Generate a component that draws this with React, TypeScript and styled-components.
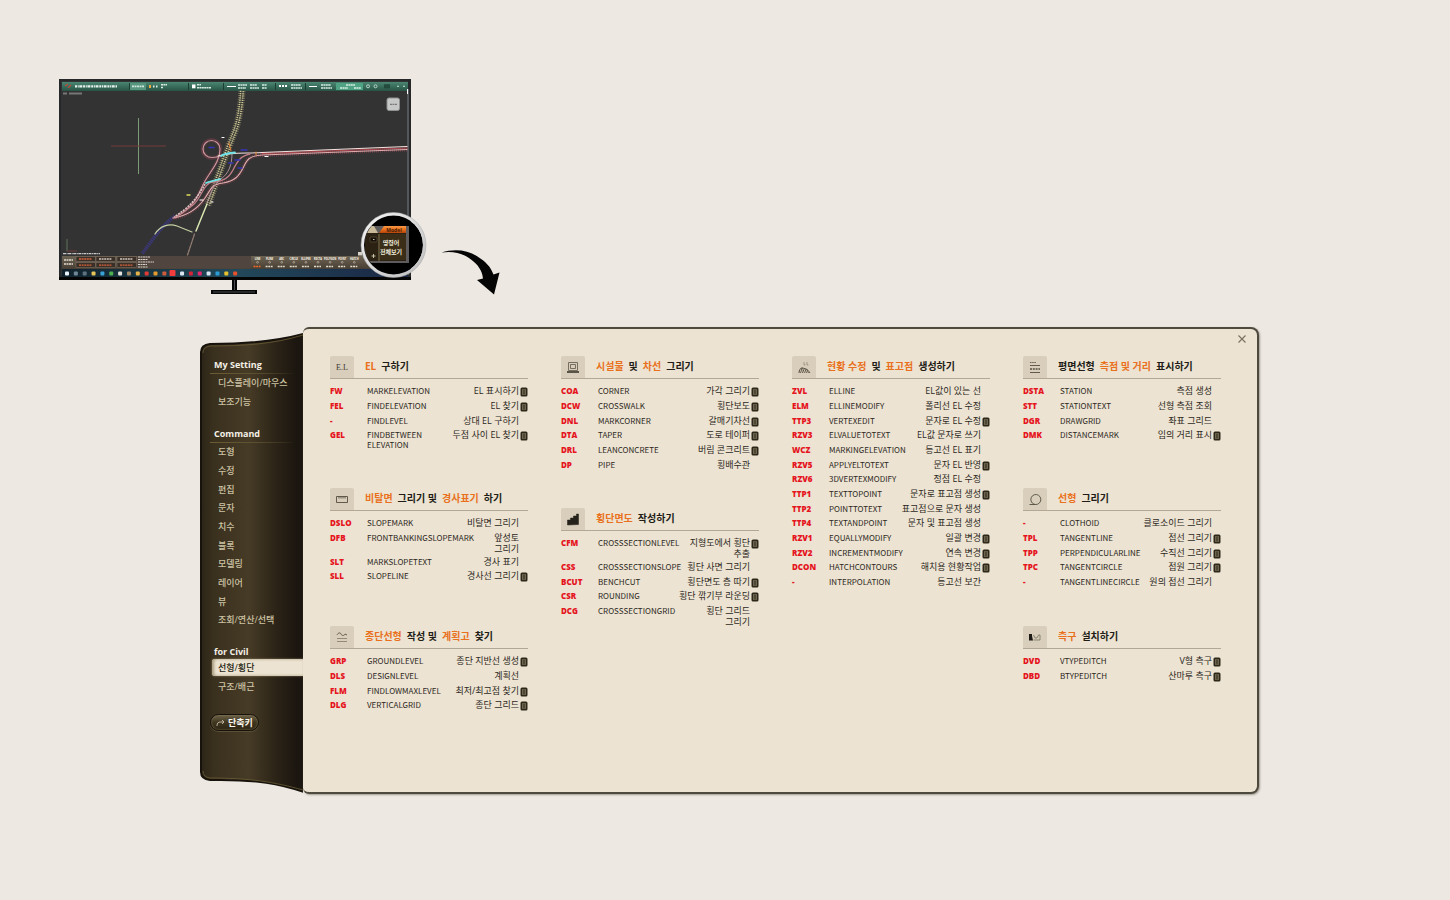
import React from "react";
import styled, { createGlobalStyle } from "styled-components";

const GlobalStyle = createGlobalStyle`
  * { box-sizing: border-box; }
  body {
    margin: 0;
    background: #ede8e2;
    color: #2d2822;
    font-family: "Open Sans", "Noto Sans CJK KR", sans-serif;
  }
`;

/* ---------- data ---------- */

type Command = { code: string; name: string[]; desc: string[]; badge?: boolean };
type Part = { text: string; hot?: boolean };
type IconName = "el" | "ruler" | "profile" | "frame" | "stairs" | "terrain" | "station" | "curve" | "ditch";
type Group = { id: string; icon: IconName; title: Part[]; rows: Command[]; reach?: number };

const row = (code: string, name: string, desc: string, badge = false): Command => ({
  code,
  name: name.split("|"),
  desc: desc.split("|"),
  badge,
});
const hot = (text: string): Part => ({ text, hot: true });
const ink = (text: string): Part => ({ text });

const columns: Group[][] = [
  [
    {
      id: "el", icon: "el", reach: 132, title: [hot("EL"), ink("구하기")],
      rows: [
        row("FW", "MARKELEVATION", "EL 표시하기", true),
        row("FEL", "FINDELEVATION", "EL 찾기", true),
        row("-", "FINDLEVEL", "상대 EL 구하기"),
        row("GEL", "FINDBETWEEN|ELEVATION", "두점 사이 EL 찾기", true),
      ],
    },
    {
      id: "slope", icon: "ruler", reach: 138,
      title: [hot("비탈면"), ink("그리기 및"), hot("경사표기"), ink("하기")],
      rows: [
        row("DSLO", "SLOPEMARK", "비탈면 그리기"),
        row("DFB", "FRONTBANKINGSLOPEMARK", "앞성토|그리기"),
        row("SLT", "MARKSLOPETEXT", "경사 표기"),
        row("SLL", "SLOPELINE", "경사선 그리기", true),
      ],
    },
    {
      id: "profile", icon: "profile",
      title: [hot("종단선형"), ink("작성 및"), hot("계획고"), ink("찾기")],
      rows: [
        row("GRP", "GROUNDLEVEL", "종단 지반선 생성", true),
        row("DLS", "DESIGNLEVEL", "계획선"),
        row("FLM", "FINDLOWMAXLEVEL", "최저/최고점 찾기", true),
        row("DLG", "VERTICALGRID", "종단 그리드", true),
      ],
    },
  ],
  [
    {
      id: "facility", icon: "frame", reach: 152,
      title: [hot("시설물"), ink("및"), hot("차선"), ink("그리기")],
      rows: [
        row("COA", "CORNER", "가각 그리기", true),
        row("DCW", "CROSSWALK", "횡단보도", true),
        row("DNL", "MARKCORNER", "갈매기차선", true),
        row("DTA", "TAPER", "도로 테이퍼", true),
        row("DRL", "LEANCONCRETE", "버림 콘크리트", true),
        row("DP", "PIPE", "횡배수관"),
      ],
    },
    {
      id: "cross", icon: "stairs", title: [hot("횡단면도"), ink("작성하기")],
      rows: [
        row("CFM", "CROSSSECTIONLEVEL", "지형도에서 횡단|추출", true),
        row("CSS", "CROSSSECTIONSLOPE", "횡단 사면 그리기"),
        row("BCUT", "BENCHCUT", "횡단면도 층 따기", true),
        row("CSR", "ROUNDING", "횡단 깎기부 라운딩", true),
        row("DCG", "CROSSSECTIONGRID", "횡단 그리드|그리기"),
      ],
    },
  ],
  [
    {
      id: "survey", icon: "terrain",
      title: [hot("현황 수정"), ink("및"), hot("표고점"), ink("생성하기")],
      rows: [
        row("ZVL", "ELLINE", "EL값이 있는 선"),
        row("ELM", "ELLINEMODIFY", "폴리선 EL 수정"),
        row("TTP3", "VERTEXEDIT", "문자로 EL 수정", true),
        row("RZV3", "ELVALUETOTEXT", "EL값 문자로 쓰기"),
        row("WCZ", "MARKINGELEVATION", "등고선 EL 표기"),
        row("RZV5", "APPLYELTOTEXT", "문자 EL 반영", true),
        row("RZV6", "3DVERTEXMODIFY", "정점 EL 수정"),
        row("TTP1", "TEXTTOPOINT", "문자로 표고점 생성", true),
        row("TTP2", "POINTTOTEXT", "표고점으로 문자 생성"),
        row("TTP4", "TEXTANDPOINT", "문자 및 표고점 생성"),
        row("RZV1", "EQUALLYMODIFY", "일괄 변경", true),
        row("RZV2", "INCREMENTMODIFY", "연속 변경", true),
        row("DCON", "HATCHCONTOURS", "해치용 현황작업", true),
        row("-", "INTERPOLATION", "등고선 보간"),
      ],
    },
  ],
  [
    {
      id: "station", icon: "station", reach: 132,
      title: [ink("평면선형"), hot("측점 및 거리"), ink("표시하기")],
      rows: [
        row("DSTA", "STATION", "측점 생성"),
        row("STT", "STATIONTEXT", "선형 측점 조회"),
        row("DGR", "DRAWGRID", "좌표 그리드"),
        row("DMK", "DISTANCEMARK", "임의 거리 표시", true),
      ],
    },
    {
      id: "alignment", icon: "curve", reach: 138, title: [hot("선형"), ink("그리기")],
      rows: [
        row("-", "CLOTHOID", "클로소이드 그리기"),
        row("TPL", "TANGENTLINE", "접선 그리기", true),
        row("TPP", "PERPENDICULARLINE", "수직선 그리기", true),
        row("TPC", "TANGENTCIRCLE", "접원 그리기", true),
        row("-", "TANGENTLINECIRCLE", "원의 접선 그리기"),
      ],
    },
    {
      id: "ditch", icon: "ditch", title: [hot("측구"), ink("설치하기")],
      rows: [
        row("DVD", "VTYPEDITCH", "V형 측구", true),
        row("DBD", "BTYPEDITCH", "산마루 측구", true),
      ],
    },
  ],
];

const menus = [
  { title: "My Setting", ruled: true, items: ["디스플레이/마우스", "보조기능"] },
  {
    title: "Command",
    ruled: true,
    items: ["도형", "수정", "편집", "문자", "치수", "블록", "모델링", "레이어", "뷰", "조회/연산/선택"],
  },
  { title: "for Civil", ruled: false, items: ["선형/횡단", "구조/배근"] },
];
const activeItem = "선형/횡단";

/* ---------- page ---------- */

const Page = styled.main`
  min-height: 100vh;
  padding-bottom: 80px;
`;

const Hero = styled.header`
  padding: 72px 0 0 52px;
  svg { display: block; }
`;

const Book = styled.section`
  display: flex;
  align-items: stretch;
  margin: 27px 191px 0 200px;
`;

/* ---------- sidebar ---------- */

const Side = styled.nav`
  position: relative;
  flex: 0 0 103px;
  padding: 31px 0 56px 10px;
`;

const Cover = styled.svg`
  position: absolute;
  inset: 0;
  width: 100%;
  height: 100%;
`;

const Menu = styled.div`
  position: relative;
  margin-bottom: 15px;
`;

const MenuTitle = styled.h2<{ $ruled: boolean }>`
  margin: 0 8px 0 0;
  padding-left: 4px;
  height: ${(p) => (p.$ruled ? 16 : 14)}px;
  font-size: 9px;
  line-height: 14px;
  font-weight: 700;
  color: #f4f0e6;
  border-bottom: ${(p) => (p.$ruled ? "1px solid" : "0 solid")};
  border-image: linear-gradient(90deg, #6a5c33, #5d5130 50%, transparent) 1;
`;

const MenuList = styled.ul`
  list-style: none;
  margin: 0;
  padding: 0;
`;

const MenuItem = styled.li`
  height: 19px;
  &:nth-child(3n) { height: 18px; }
`;

const MenuLink = styled.a<{ $active: boolean }>`
  display: block;
  height: 17px;
  margin-left: 2px;
  padding-left: 6px;
  font-size: 9px;
  line-height: 17px;
  font-weight: 500;
  white-space: nowrap;
  text-decoration: none;
  border-radius: 3px 0 0 3px;
  color: ${(p) => (p.$active ? "#241d10" : "#cdc3a4")};
  background: ${(p) => (p.$active ? "#ece3d2" : "transparent")};
  box-shadow: ${(p) => (p.$active ? "inset 2px 0 3px #a89b7c, 0 0 2px #9c8f6c" : "none")};
`;

const ShortcutButton = styled.button`
  position: relative;
  display: flex;
  align-items: center;
  gap: 3px;
  width: 49px;
  height: 17px;
  margin-top: 17px;
  padding: 0 5px;
  border: 1px solid #16120a;
  border-radius: 9px;
  background: linear-gradient(#6c6147, #40361f 50%, #2c2413);
  box-shadow: inset 0 0 2px #8d8264, 0 1px 0 #5c5138;
  color: #fbf8f0;
  font: 700 9px/15px "Open Sans", "Noto Sans CJK KR", sans-serif;
  white-space: nowrap;
`;

/* ---------- sheet ---------- */

const Sheet = styled.div`
  position: relative;
  flex: 1;
  min-width: 0;
  min-height: 467px;
  padding: 27px 36px 40px 27px;
  background: #ece3d2;
  border: 2px solid #4e4a3e;
  border-left: 0;
  border-radius: 6px 8px 8px 6px;
  box-shadow: 1px 1px 2px #a19b90;
`;

const CloseButton = styled.button`
  position: absolute;
  top: 5px;
  right: 10px;
  width: 10px;
  height: 10px;
  padding: 0;
  border: 0;
  background: none;
  svg { display: block; }
`;

const Columns = styled.div`
  display: grid;
  grid-template-columns: repeat(4, minmax(0, 1fr));
  column-gap: 33px;
`;

const GroupBlock = styled.section<{ $reach: number }>`
  min-height: ${(p) => p.$reach}px;
`;

const GroupHead = styled.div`
  display: flex;
  align-items: stretch;
  gap: 11px;
  height: 23px;
  border-bottom: 1px solid #b3a896;
`;

const IconTile = styled.span`
  width: 24px;
  height: 22px;
  border-radius: 2px 2px 0 0;
  background: #d8cebb;
  svg { display: block; }
`;

const GroupTitle = styled.h3`
  display: flex;
  gap: 5px;
  margin: 0;
  font-size: 10px;
  line-height: 20px;
  font-weight: 700;
  white-space: nowrap;
`;

const TitlePart = styled.span<{ $hot?: boolean }>`
  color: ${(p) => (p.$hot ? "#e9701c" : "#211c16")};
`;

const CommandTable = styled.table`
  width: 100%;
  margin-top: 5px;
  table-layout: fixed;
  border-collapse: collapse;
`;

const CommandRow = styled.tr`
  height: 15px;
  &:nth-child(3n) { height: 14px; }
`;

const Code = styled.th`
  width: 37px;
  padding: 2px 0;
  text-align: left;
  vertical-align: top;
  font-size: 8px;
  line-height: 10px;
  font-weight: 800;
  color: #e5141d;
  white-space: nowrap;
`;

const Name = styled.td`
  padding: 2px 0;
  vertical-align: top;
  font-family: "Noto Sans CJK KR", sans-serif;
  font-size: 8px;
  line-height: 10px;
  white-space: nowrap;
`;

const Desc = styled.td`
  width: 85px;
  padding: 1px 0;
  text-align: right;
  vertical-align: top;
  font-size: 9px;
  line-height: 11px;
  white-space: nowrap;
`;

const Mark = styled.td`
  width: 9px;
  padding: 3px 0 0 1px;
  vertical-align: top;
  line-height: 0;
`;

/* ---------- drawings ---------- */

const groupDrawings: Record<IconName, React.ReactNode> = {
  el: <text x="12" y="14" textAnchor="middle" fontFamily="Liberation Serif, serif" fontSize="8" fill="#3b352b" stroke="none">E.L</text>,
  ruler: <path d="M6.500 8.500h11v6h-11zM9 8.500v2M11 8.500v2M13 8.500v2M15 8.500v2" />,
  profile: (
    <>
      <path d="M7 9c1-2 3-3 4-1s3 2 4 0l2 1" />
      <path d="M7 12.500h10M7 15.500h10" stroke="#8b8271" />
    </>
  ),
  frame: (
    <>
      <path d="M7.500 6.500h9v8h-9zM9.500 8.500h5v4h-5z" stroke="#6b6354" />
      <path d="M6 16h12" stroke="#2f2a22" strokeWidth="1.500" />
    </>
  ),
  stairs: <path d="M6.500 17v-5h3v-2h3v-2h3v-2h2v10.500z" fill="#25211b" stroke="#25211b" strokeWidth="0.500" />,
  terrain: (
    <>
      <path d="M7 17c0-3 2-6 4-5s4 0 7 5M8.500 17l-1-3M10.500 17l-1.500-5M12.500 17l-2-5M14.500 17l-2-5M16.500 17l-2-4" />
      <path d="M12 6v3h1.500M15 6v3h1.500" strokeWidth="0.600" stroke="#7c7362" />
    </>
  ),
  station: (
    <>
      <path d="M7 9.500h10M7 16.500h10" />
      <path d="M7 6.500h6" strokeDasharray="1.500 0.700" />
      <path d="M7 13h10" strokeDasharray="2 0.800" strokeWidth="1.400" />
    </>
  ),
  curve: <path d="M6.500 16.500h6a5 5 0 1 0-4-2.500c1 1.500 2 2 4 2.500" />,
  ditch: (
    <>
      <path d="M6 8h3v2l1 4.500h-4z" fill="#1f1b16" stroke="none" />
      <path d="M10.500 14h6.500v-5h-1.500l-1.500 3h-2l-1.500-3" stroke="#847b6a" />
    </>
  ),
};

const GroupIcon = ({ name }: { name: IconName }) => (
  <svg width="24" height="22" viewBox="0 0 24 22" fill="none" stroke="#554d40" strokeWidth="0.9" aria-hidden="true">
    {groupDrawings[name]}
  </svg>
);

const Badge = () => (
  <svg width="8" height="10" viewBox="0 0 8 10" role="img" aria-label="icon">
    <rect x="0.500" y="0.500" width="7" height="9" rx="1.500" fill="#2d2719" />
    <rect x="2" y="2" width="4" height="6" rx="1" fill="#7d755d" />
    <path d="M4 2v6M2.500 4h3M2.500 6h3" stroke="#2d2719" strokeWidth="0.700" />
  </svg>
);

const roads = {
  upper: "M242 91c-1 15-3 31-9 45s-12 33-25 69",
  main: "M407 146.500L262 152.500c-20 1-32 0-44 3.500",
  mainLow: "M407 149.500L262 155c-14 1-15 5-19 13s-8 13-20 15-10 3-18 15-19 18-32 20",
  ramp: "M250 154c-10 2-13 8-17 16s-11 12-20 12-12 17-20 23-12 10-20 13",
  loop: "M203 149a8.500 8.500 0 1 1 17 0c0 12-8 20-15 32s-6 22-30 37M203 149c0 5 4 8.500 9 8.500 4 0 7-1 9-2",
};

const commandKeys = ["LINE", "PLINE", "ARC", "CIRCLE", "ELLIPSE", "RECTA", "POLYGON", "POINT", "HATCH"];
const taskColors = [
  "#e8f2fa", "#6f8795", "#5d7480", "#e8c35a", "#39a3d8", "#4caf50", "#e6e2dc", "#a08a6a", "#e5b24a", "#e03a34",
  "#e49a2c", "#d05a3c", "#f03c3c", "#dce6ee", "#d42438", "#e8286c", "#d8e6f4", "#2c9cd8", "#e8c02c", "#e4512c",
];

const Illustration = () => (
  <svg width="456" height="228" viewBox="52 72 456 228" role="img" aria-label="CAD workstation with a magnified command menu">
    <defs>
      <linearGradient id="bar" x1="0" y1="0" x2="0" y2="1">
        <stop offset="0" stopColor="#4a8672" />
        <stop offset="1" stopColor="#285345" />
      </linearGradient>
      <linearGradient id="task" x1="0" y1="0" x2="1" y2="0">
        <stop offset="0" stopColor="#10222c" />
        <stop offset="0.500" stopColor="#22495a" />
        <stop offset="1" stopColor="#1a2544" />
      </linearGradient>
      <linearGradient id="brown" x1="0" y1="0" x2="0" y2="1">
        <stop offset="0" stopColor="#6d6353" />
        <stop offset="1" stopColor="#483f34" />
      </linearGradient>
      <linearGradient id="orange" x1="0" y1="0" x2="0" y2="1">
        <stop offset="0" stopColor="#f79a48" />
        <stop offset="0.500" stopColor="#ea6d18" />
        <stop offset="1" stopColor="#b5450a" />
      </linearGradient>
      <linearGradient id="ring" x1="0" y1="0" x2="1" y2="1">
        <stop offset="0" stopColor="#f6f6f6" />
        <stop offset="1" stopColor="#bdbdbd" />
      </linearGradient>
      <clipPath id="lens"><circle cx="393.500" cy="245" r="29" /></clipPath>
    </defs>

    {/* monitor body and stand */}
    <rect x="59" y="79" width="352" height="200.500" fill="#262829" />
    <rect x="61" y="81" width="347" height="194" fill="#333333" />
    <rect x="59" y="277" width="352" height="3" fill="#050505" />
    <rect x="232" y="280" width="5" height="11" fill="#050505" />
    <rect x="211" y="290" width="46" height="4" fill="#050505" />
    <path d="M213 292h42M234.500 280v10" stroke="#4a4c50" strokeWidth="1" />

    {/* title bar */}
    <rect x="62" y="82" width="346" height="9" fill="url(#bar)" />
    <rect x="130" y="83" width="16" height="7" fill="#57957f" />
    <rect x="336" y="83" width="27" height="7" fill="#4fa283" />
    <path d="M129.500 83v7M188.500 83v7M223.500 83v7M275.500 83v7M305.500 83v7" stroke="#1d3c32" />
    <path d="M65 86l3-2M68 88l3-3" stroke="#c4483a" strokeWidth="1.200" />
    <path d="M75 86.300h42" stroke="#e6f2ec" strokeWidth="2.200" strokeDasharray="2 0.700 1 0.600 3 0.800" />
    <path d="M132 86.300h12" stroke="#cde6da" strokeWidth="1.800" strokeDasharray="2 0.500" />
    <rect x="149" y="85" width="2" height="3" fill="#f2a93c" />
    <path d="M153 86.500h6" stroke="#dfe9e4" strokeWidth="2" strokeDasharray="1.500 1.500" />
    <path d="M161 84.800h6M161 87.600h2M197 84.800h4M197 87.800h14M238 85h9M250 85h7M262 85h5M238 88h8M250 88h9M262 88h5M291 85h10M291 88h11M321 85h10M321 88h11M346 85h9M340 88h8M354 88h7" stroke="#d8ebe2" strokeWidth="1.500" strokeDasharray="2 0.400" />
    <rect x="192" y="84.500" width="3.500" height="3.800" fill="#fff" />
    <path d="M227 86.500h9M309 86.500h8" stroke="#fff" />
    <path d="M279 86h8" stroke="#fff" strokeWidth="2" strokeDasharray="2 1" />
    <circle cx="368" cy="86.300" r="1.500" fill="none" stroke="#b9d4c8" />
    <circle cx="375.500" cy="86.300" r="1.500" fill="none" stroke="#b9d4c8" />
    <path d="M384 86.300h6" stroke="#234a3c" strokeWidth="4" />
    <path d="M397 86.300h2M403 86.300h2" stroke="#c9dfd5" />

    {/* canvas */}
    <path d="M63 93.500h4M69 93.500h13" stroke="#777" strokeWidth="2" />
    <path d="M138.500 118v56" stroke="#7d9a76" />
    <path d="M111 146h55" stroke="#753c3c" />
    <path d="M408 89v186" stroke="#55585a" strokeWidth="2" />
    <path d="M407.500 89v5" stroke="#fff" />
    <path d="M67 239v12" fill="none" stroke="#5f7c5c" strokeWidth="0.900" />
    <path d="M67 251h10" fill="none" stroke="#7a3b3b" strokeWidth="0.900" />
    <rect x="387" y="98" width="12.500" height="12.500" rx="2" fill="#c6c7c7" stroke="#8f9191" />
    <path d="M390 104.300h7" stroke="#666" strokeDasharray="2 0.500" />

    <g fill="none" strokeLinecap="round">
      <path d="M175 216c-14 10-24 26-33 38" stroke="#3b3778" strokeWidth="3.500" strokeDasharray="1.500 0.700" strokeLinecap="butt" />
      <path d={roads.upper} stroke="#77735a" strokeWidth="7" strokeDasharray="1 1.200" strokeLinecap="butt" />
      <path d={roads.upper} stroke="#cfc896" strokeWidth="4" strokeDasharray="1.200 1" strokeLinecap="butt" />
      <path d={roads.upper} stroke="#414238" strokeWidth="1" />
      <circle cx="211.500" cy="149" r="10" stroke="#5c3a42" strokeWidth="1.500" strokeDasharray="1 1" />
      <path d={roads.loop} stroke="#5c3a42" strokeWidth="4" strokeDasharray="1 1" strokeLinecap="butt" />
      <path d={roads.loop} stroke="#cf969c" strokeWidth="1.200" />
      <path d={roads.mainLow} stroke="#6a3e47" strokeWidth="4" strokeDasharray="1 1" strokeLinecap="butt" />
      <path d="M407 148L262 153.700" stroke="#a8464c" strokeWidth="1.200" />
      <path d={roads.main} stroke="#f5e2df" strokeWidth="1.200" />
      <path d={roads.mainLow} stroke="#e0adae" strokeWidth="1.100" />
      <path d={roads.ramp} stroke="#c07d86" strokeWidth="1.300" />
      <path d="M205 184c-6 12-16 24-31 33" stroke="#d8c3c4" strokeWidth="1.500" strokeDasharray="2 1" strokeLinecap="butt" />
      <path d="M232 153c0 12-3 20-11 26s-10 14-14 24" stroke="#a88f96" strokeWidth="1" />
      <path d="M221 156c3-2 8-3 14-3.500M206 183c3-2 8-2 14-4" stroke="#6fe4e6" strokeWidth="1.800" />
      <path d="M209 147.500h5M241 150h6M235 160h5M229 163h4M238 168h4" stroke="#3734b8" strokeWidth="1.500" />
      <path d="M222 137.500h2M265 156.500h3M200 200h3M211 202h2" stroke="#fff" strokeWidth="1.200" />
      <path d="M187 195h3" stroke="#dede5a" strokeWidth="1.300" />
      <path d="M207 204l-11 27" stroke="#d8e6b0" strokeWidth="1.500" />
      <path d="M194.500 234l-7 21" stroke="#937d72" strokeWidth="1.300" strokeDasharray="3 1" />
      <path d="M155 234c5-8 14-11 22-8l15 6" stroke="#c5d0a4" strokeWidth="1.200" />
      <path d="M229 143l2 8M256 152v3" stroke="#e07a2c" strokeWidth="1" />
    </g>

    {/* command bar */}
    <path d="M63 253.700h37" stroke="#c8c8c8" strokeWidth="1.200" strokeDasharray="3 0.600 1 0.500" />
    <rect x="62" y="256" width="346" height="13" fill="url(#brown)" />
    <rect x="137" y="256" width="114" height="12.500" fill="#50463f" />
    <path d="M64 260h9M64 264h9" stroke="#e0dace" strokeWidth="1.700" strokeDasharray="2 0.500" />
    {[76, 96, 117].map((x) => (
      <g key={x}>
        <rect x={x} y="256.500" width="19.500" height="5" fill="#3b3028" stroke="#85796a" strokeWidth="0.500" />
        <rect x={x} y="262.500" width="19.500" height="5" fill="#3b3028" stroke="#85796a" strokeWidth="0.500" />
        <path d={`M${x + 3} 265.200h13`} stroke="#d9643c" strokeWidth="1.300" strokeDasharray="2 0.600" />
        <path d={`M${x + 3} 259h13`} stroke={x === 76 ? "#d9643c" : "#cfc8ba"} strokeWidth="1.300" strokeDasharray="2 0.600" />
      </g>
    ))}
    <path d="M138 257h12M138 259.500h10M138 262h16M138 264.500h9M138 267h10" stroke="#d8d2c8" strokeWidth="1" strokeDasharray="2 0.500" />
    {commandKeys.map((key, i) => (
      <g key={key}>
        <text x={257.500 + i * 12.100} y="259.500" textAnchor="middle" fontSize="2.500" fontWeight="700" fill="#fffaf0">{key}</text>
        <circle cx={257.500 + i * 12.100} cy="262.300" r="0.900" fill="none" stroke="#ddd5c6" strokeWidth="0.500" />
        <path d={`M${253.500 + i * 12.100} 266.500h7`} stroke={i === 0 ? "#f06a2c" : "#e3dccd"} strokeWidth="1.700" strokeDasharray="2 0.700" />
      </g>
    ))}
    <rect x="358" y="252" width="4" height="3.500" fill="#d8d2c4" />

    {/* task bar */}
    <rect x="62" y="269" width="346" height="8" fill="url(#task)" />
    {taskColors.map((color, i) => (
      <rect key={i} x={i === 12 ? 169.500 : 65 + i * 8.850} y={i === 12 ? 270 : 271.500} width={i === 12 ? 6 : 4} height={i === 12 ? 6 : 4} rx="1" fill={color} />
    ))}

    {/* magnifier */}
    <circle cx="393.500" cy="245" r="29.500" fill="#000" />
    <g clipPath="url(#lens)">
      <path d="M365 226h44v37h-44z" fill="#5d5b5b" />
      <rect x="365" y="233" width="41" height="28" fill="#2b2213" />
      <rect x="380" y="234" width="26" height="26" rx="1" fill="#3a2e19" />
      <path d="M379 234v27" stroke="#85754f" />
      <path d="M365 226h9l4 7h-13z" fill="#c8b999" />
      <path d="M379 233l5-7h22v7z" fill="url(#orange)" />
      <rect x="370" y="237" width="7" height="5" rx="1" fill="#18120a" stroke="#6a5d40" strokeWidth="0.600" />
      <path d="M373 239.500h1.500M371.500 256h4M373.500 254v4" stroke="#c9bfa4" />
      <text x="394" y="232" textAnchor="middle" fontSize="5" fontWeight="700" fill="#43200a">Model</text>
      <text x="391" y="245" textAnchor="middle" fontSize="6" fontWeight="700" fill="#f1ecdc">명령어</text>
      <text x="391" y="254" textAnchor="middle" fontSize="6" fontWeight="700" fill="#f1ecdc">전체보기</text>
    </g>
    <circle cx="393.500" cy="245" r="31" fill="none" stroke="url(#ring)" strokeWidth="3" />
    <circle cx="393.500" cy="245" r="32.500" fill="none" stroke="#a9a9a9" strokeWidth="0.500" />

    {/* arrow to the enlarged menu */}
    <path d="M441.500 252.500c12-4 26-3 36 4 8 5 13 10 16 18l6-2-5.500 22-17-14.500 6-1.500c-1-8-5-14-12-19-8-6-18-9-29.500-7z" fill="#050505" />
  </svg>
);

const SideCover = () => (
  <Cover viewBox="0 0 103 467" preserveAspectRatio="none" aria-hidden="true">
    <defs>
      <linearGradient id="cover" x1="0" y1="0" x2="1" y2="0">
        <stop offset="0" stopColor="#2b2417" />
        <stop offset="0.120" stopColor="#3a301e" />
        <stop offset="0.450" stopColor="#463b26" />
        <stop offset="0.700" stopColor="#2c2417" />
        <stop offset="0.900" stopColor="#1c1610" />
        <stop offset="1" stopColor="#1c1610" />
      </linearGradient>
    </defs>
    <path d="M1 25q0-7 9-8c34 0 66-2 97-11v460c-26-9-50-14-97-13q-9-1-9-8z" fill="url(#cover)" stroke="#17130c" strokeWidth="2" />
    <path d="M3 26q0-6 7-7c34 0 64-2 93-11" fill="none" stroke="#6b5c36" strokeWidth="0.800" />
    <path d="M3 444q0 6 7 7c40 0 64 4 93 12" fill="none" stroke="#6b5c36" strokeWidth="0.800" />
  </Cover>
);

/* ---------- pieces ---------- */

const Lines = ({ lines }: { lines: string[] }) => (
  <>
    {lines.map((line, i) => (
      <React.Fragment key={line}>
        {i > 0 && <br />}
        {line}
      </React.Fragment>
    ))}
  </>
);

const CommandGroup = ({ group }: { group: Group }) => (
  <GroupBlock $reach={group.reach ?? 0}>
    <GroupHead>
      <IconTile><GroupIcon name={group.icon} /></IconTile>
      <GroupTitle id={`title-${group.id}`}>
        {group.title.map((part) => (
          <TitlePart key={part.text} $hot={part.hot}>{part.text}</TitlePart>
        ))}
      </GroupTitle>
    </GroupHead>
    <CommandTable aria-labelledby={`title-${group.id}`}>
      <tbody>
        {group.rows.map((item) => (
          <CommandRow key={item.name[0]}>
            <Code scope="row">{item.code}</Code>
            <Name><Lines lines={item.name} /></Name>
            <Desc><Lines lines={item.desc} /></Desc>
            <Mark>{item.badge && <Badge />}</Mark>
          </CommandRow>
        ))}
      </tbody>
    </CommandTable>
  </GroupBlock>
);

export default function App() {
  return (
    <>
      <GlobalStyle />
      <Page>
        <Hero><Illustration /></Hero>
        <Book>
          <Side aria-label="Menu">
            <SideCover />
            {menus.map((menu) => (
              <Menu key={menu.title}>
                <MenuTitle $ruled={menu.ruled}>{menu.title}</MenuTitle>
                <MenuList>
                  {menu.items.map((item) => (
                    <MenuItem key={item}>
                      <MenuLink href="#" $active={item === activeItem}>{item}</MenuLink>
                    </MenuItem>
                  ))}
                </MenuList>
              </Menu>
            ))}
            <ShortcutButton type="button">
              <svg width="9" height="8" viewBox="0 0 9 8" fill="none" stroke="#c9c1ab" strokeWidth="0.900" aria-hidden="true">
                <path d="M1 7c0-3 1-4 4-4h3M6 1l2 2-2 2" />
              </svg>
              단축키
            </ShortcutButton>
          </Side>
          <Sheet>
            <CloseButton type="button" aria-label="Close">
              <svg width="10" height="10" viewBox="0 0 10 10" stroke="#77705f" strokeWidth="1.100">
                <path d="M1.500 1.500l7 7M8.500 1.500l-7 7" />
              </svg>
            </CloseButton>
            <Columns>
              {columns.map((groups) => (
                <div key={groups[0].id}>
                  {groups.map((group) => <CommandGroup key={group.id} group={group} />)}
                </div>
              ))}
            </Columns>
          </Sheet>
        </Book>
      </Page>
    </>
  );
}
